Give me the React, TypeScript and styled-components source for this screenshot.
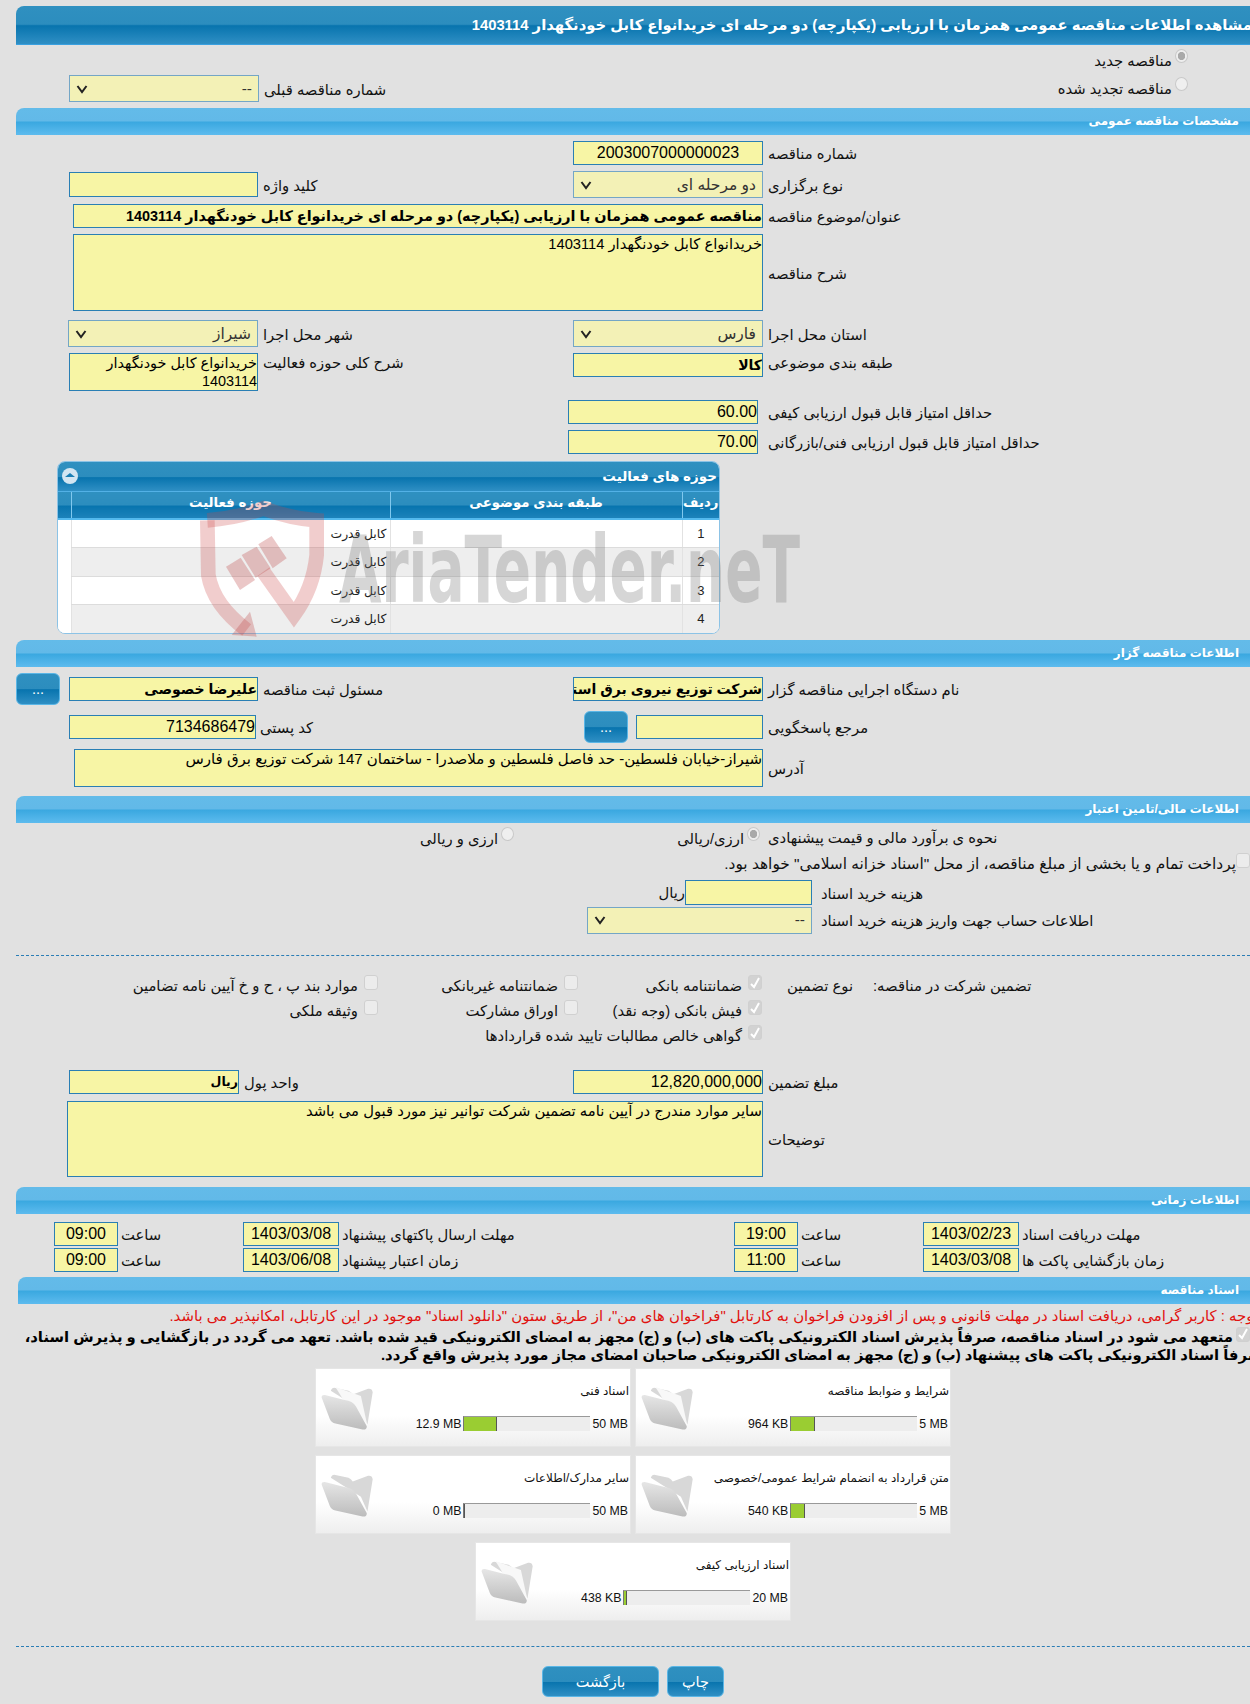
import React from "react";
import styled, { createGlobalStyle } from "styled-components";

const Global = createGlobalStyle`
  html, body { margin: 0; padding: 0; width: 1250px; height: 1704px; overflow: hidden; background: #e1e1e1; }
  body { font-family: "Liberation Sans", "DejaVu Sans", sans-serif; font-size: 14.8px; color: #111; }
`;

const Page = styled.div`
  width: 1234px;
  margin-left: 16px;
  padding-top: 6px;
  direction: rtl;
`;

const TitleBar = styled.div`
  height: 39px;
  margin-right: -30px;
  padding-right: 28px;
  box-sizing: border-box;
  border-radius: 8px 8px 0 0;
  border-bottom: 1px solid #39a0e0;
  background: linear-gradient(#2f90c0 0, #2c8dbe 48%, #0874ae 52%, #2f8fc4 100%);
  color: #fff;
  font-size: 14.8px;
  font-weight: bold;
  line-height: 38px;
  white-space: nowrap;
`;

const SectionBar = styled.div<{ $mt: number; $inset?: number }>`
  height: 27px;
  margin-top: ${(p) => p.$mt}px;
  margin-left: ${(p) => p.$inset || 0}px;
  margin-right: -12px;
  padding-right: 23px;
  box-sizing: border-box;
  border-radius: 8px 8px 0 0;
  background: linear-gradient(#63bbe9 0, #62b9e8 48%, #3aa8e0 52%, #5dbbee 100%);
  color: #fff;
  font-size: 12px;
  font-weight: bold;
  line-height: 26px;
`;

const Row = styled.div<{ $mt: number; $h: number; $top?: boolean }>`
  display: flex;
  height: ${(p) => p.$h}px;
  margin-top: ${(p) => p.$mt}px;
  align-items: ${(p) => (p.$top ? "flex-start" : "center")};
`;

const Label = styled.div<{ $w: number; $pt?: number }>`
  flex: none;
  width: ${(p) => p.$w}px;
  padding-top: ${(p) => p.$pt ?? 1}px;
  box-sizing: border-box;
  text-align: left;
  white-space: nowrap;
`;

const Field = styled.div<{ $w: number; $h: number; $size?: number; $bold?: boolean; $center?: boolean; $wrap?: boolean }>`
  flex: none;
  width: ${(p) => p.$w}px;
  height: ${(p) => p.$h}px;
  box-sizing: border-box;
  background: #f7f5a5;
  border: 1px solid #2a7fb4;
  overflow: hidden;
  font-size: ${(p) => p.$size || 16}px;
  line-height: ${(p) => (p.$wrap ? "18px" : `${p.$h - 2}px`)};
  font-weight: ${(p) => (p.$bold ? "bold" : "normal")};
  text-align: ${(p) => (p.$center ? "center" : "right")};
  white-space: ${(p) => (p.$wrap ? "normal" : "nowrap")};
  color: #000;
`;

const SelectBox = styled.div<{ $w: number }>`
  flex: none;
  display: flex;
  justify-content: space-between;
  align-items: center;
  width: ${(p) => p.$w}px;
  height: 27px;
  padding: 0 6px 0 5px;
  box-sizing: border-box;
  background: #f3f1b6;
  border: 1px solid #74a6c6;
  font-size: 15.5px;
  color: #333;
`;

const Chevron = () => (
  <svg width="14" height="14" viewBox="0 0 14 14" fill="none" stroke="#222" strokeWidth="2">
    <path d="M2.5 4 L7 10 L11.5 4" />
  </svg>
);

const RadioMark = styled.span<{ $on?: boolean }>`
  flex: none;
  display: inline-block;
  width: 13px;
  height: 14px;
  margin-top: -9px;
  box-sizing: border-box;
  border-radius: 50%;
  border: 1px solid #c9c9c9;
  background: ${(p) => (p.$on ? "radial-gradient(#a9a9a9 0 3.5px, #eee 4px)" : "#efefef")};
`;

const Option = styled.div<{ $w?: number; $pr?: number; $gap?: number; $size?: number; $mt?: number }>`
  flex: none;
  display: flex;
  align-items: center;
  gap: ${(p) => p.$gap ?? 3}px;
  width: ${(p) => (p.$w ? `${p.$w}px` : "auto")};
  padding-right: ${(p) => p.$pr || 0}px;
  margin-top: ${(p) => p.$mt || 0}px;
  box-sizing: border-box;
  font-size: ${(p) => (p.$size ? `${p.$size}px` : "inherit")};
  white-space: nowrap;
`;

const CheckBoxMark = styled.span<{ $on?: boolean }>`
  flex: none;
  display: inline-flex;
  align-items: center;
  justify-content: center;
  width: 14px;
  height: 15px;
  margin-top: -6px;
  box-sizing: border-box;
  border-radius: 3px;
  border: 1px solid #d0d0d0;
  background: ${(p) => (p.$on ? "#d2d2d2" : "#ececec")};
`;

const Check = ({ on }: { on?: boolean }) => (
  <CheckBoxMark $on={on}>
    {on && (
      <svg width="12" height="12" viewBox="0 0 12 12" fill="none" stroke="#fff" strokeWidth="2">
        <path d="M2 7 L5 10 L10 1" />
      </svg>
    )}
  </CheckBoxMark>
);

const PanelFrame = styled.div`
  position: relative;
  width: 663px;
  height: 173px;
  margin: 7px 530px 0 0;
`;

const Panel = styled.div`
  height: 100%;
  box-sizing: border-box;
  border: 1px solid #8cc3e6;
  border-radius: 8px;
  background: #fff;
  overflow: hidden;
`;

const PanelHead = styled.div`
  display: flex;
  justify-content: space-between;
  align-items: center;
  height: 30px;
  padding: 0 2px 2px 4px;
  box-sizing: border-box;
  border-bottom: 1px solid #53b1e6;
  background: linear-gradient(#2f90c0 0, #2c8dbe 50%, #0874ae 54%, #2f8fc4 100%);
  color: #fff;
  font-size: 13.5px;
  font-weight: bold;
`;

const Toggle = styled.span`
  display: inline-flex;
  align-items: center;
  justify-content: center;
  width: 16px;
  height: 16px;
  border-radius: 50%;
  background: #d3e6f2;
  &::before {
    content: "";
    border: 5px solid transparent;
    border-top: 0;
    border-bottom: 4px solid #1c7fb5;
    margin-bottom: 2px;
  }
`;

const Table = styled.table`
  width: 100%;
  border-collapse: collapse;
  table-layout: fixed;
`;

const Th = styled.th<{ $w?: number }>`
  width: ${(p) => (p.$w ? `${p.$w}px` : "auto")};
  height: 27px;
  box-sizing: border-box;
  padding: 0 0 5px;
  background: linear-gradient(#2f90c0 0, #2c8dbe 50%, #0874ae 54%, #1c82ba 100%);
  border-bottom: 2px solid #53b9ee;
  border-left: 1px solid #80c8ee;
  color: #fff;
  font-size: 13.3px;
  font-weight: bold;
  &:last-child { border-left: 0; }
`;

const Tr = styled.tr<{ $alt: boolean }>`
  background: ${(p) => (p.$alt ? "#eeeeee" : "#ffffff")};
`;

const Td = styled.td<{ $center?: boolean }>`
  height: 28.5px;
  padding: 0 3px;
  box-sizing: border-box;
  border-bottom: 1px solid #dcdcdc;
  border-left: 1px solid #e2e2e2;
  font-size: ${(p) => (p.$center ? 13 : 12.4)}px;
  text-align: ${(p) => (p.$center ? "center" : "right")};
  color: #222;
  &:last-child { border-left: 0; border-bottom: 0; background: #fff; }
`;

const ShieldMark = styled.svg`
  position: absolute;
  left: -7px;
  top: -6px;
  pointer-events: none;
`;

const WordMark = styled.svg`
  position: absolute;
  left: 282px;
  top: 62px;
  direction: ltr;
  pointer-events: none;
`;

const WatermarkText = styled.text`
  font-family: "DejaVu Sans Condensed", "DejaVu Sans", sans-serif;
  font-weight: bold;
  font-size: 92px;
  fill: rgba(120, 120, 120, 0.3);
`;

const Dashed = styled.div<{ $mt: number }>`
  margin-top: ${(p) => p.$mt}px;
  margin-right: -10px;
  border-top: 1px dashed #2a7db5;
`;

const GuaranteeGrid = styled.div`
  display: grid;
  grid-template-columns: 377px 111px 184px 200px auto;
  grid-auto-rows: 25px;
  margin-top: 17px;
  align-items: center;
`;

const GridLabel = styled.div<{ $pr?: number; $left?: boolean }>`
  padding-right: ${(p) => p.$pr || 0}px;
  text-align: ${(p) => (p.$left ? "left" : "right")};
  white-space: nowrap;
`;

const Notice = styled.div`
  margin: 2px -8px 0 0;
  height: 20px;
  color: #e0120f;
  font-size: 14.9px;
  line-height: 20px;
  white-space: nowrap;
`;

const Pledge = styled.div`
  margin: 2px 0 0 0;
  font-size: 14.8px;
  font-weight: bold;
  line-height: 18px;
  color: #000;
  white-space: nowrap;
`;

const PledgeSecond = styled.div`
  margin-right: -12px;
`;

const CardGrid = styled.div`
  display: flex;
  flex-wrap: wrap;
  justify-content: center;
  gap: 8px 4px;
  width: 640px;
  margin: 4px 297px 0 0;
`;

const Card = styled.div`
  display: flex;
  justify-content: space-between;
  width: 316px;
  height: 79px;
  box-sizing: border-box;
  padding: 0 1px 0 4px;
  border: 1px solid #e6e6e6;
  background: linear-gradient(#fff 0, #fff 60%, #eeeeee 100%);
`;

const CardBody = styled.div`
  display: flex;
  flex-direction: column;
  flex: 1;
`;

const CardTitle = styled.div`
  margin-top: 13px;
  height: 18px;
  font-size: 12px;
  line-height: 18px;
  color: #111;
  white-space: nowrap;
`;

const Usage = styled.div`
  direction: ltr;
  display: flex;
  justify-content: flex-end;
  align-items: center;
  gap: 2px;
  margin-top: 16px;
  padding-right: 1px;
  font-size: 12.3px;
  color: #111;
`;

const Bar = styled.div`
  width: 127px;
  height: 15px;
  box-sizing: border-box;
  border-top: 1px solid #999;
  border-left: 1px solid #777;
  background: #ededed;
`;

const BarFill = styled.div`
  height: 100%;
  box-sizing: border-box;
  background: #9acd32;
  border-right: 1px solid #555;
`;

const FolderIcon = styled.svg`
  flex: none;
  margin-top: 15px;
`;

const Folder = ({ paper, id }: { paper?: boolean; id: string }) => (
  <FolderIcon width="54" height="50" viewBox="25 75 165 145">
    <defs>
      <linearGradient id={id} x1="0" y1="0" x2="0" y2="1">
        <stop offset="0" stopColor="#e6e6e6" />
        <stop offset="1" stopColor="#bcbcbc" />
      </linearGradient>
    </defs>
    <path d="M58 92 Q62 80 72 83 L112 92 Q120 95 125 103 L172 86 Q184 84 186 96 L170 195 L150 150 Z" fill="#d8d8d8" />
    {paper && <path d="M72 80 L150 108 L168 190 L100 125 Z" fill="#f8f8f8" />}
    <path d="M30 112 Q30 104 40 105 L100 120 Q125 122 135 140 L168 200 Q168 212 155 210 L72 192 Q60 190 55 178 Z" fill={`url(#${id})`} />
  </FolderIcon>
);

const DocCard = ({ title, used, max, pct, paper, id }: { title: string; used: string; max: string; pct: number; paper?: boolean; id: string }) => (
  <Card>
    <CardBody>
      <CardTitle>{title}</CardTitle>
      <Usage>
        <span>{used}</span>
        <Bar>
          <BarFill style={{ width: `${pct}%` }} />
        </Bar>
        <span>{max}</span>
      </Usage>
    </CardBody>
    <Folder paper={paper} id={id} />
  </Card>
);

const Actions = styled.div`
  display: flex;
  justify-content: center;
  gap: 8px;
  margin: 19px 0 0 0;
`;

const Btn = styled.button<{ $w: number; $h?: number }>`
  flex: none;
  width: ${(p) => p.$w}px;
  height: ${(p) => p.$h || 31}px;
  border: 1px solid #5ab6e6;
  border-radius: 6px;
  padding: 0;
  background: linear-gradient(#2f90c0 0, #2c8dbe 50%, #0874ae 52%, #2f8fc4 100%);
  color: #fff;
  font: 14.5px "Liberation Sans", "DejaVu Sans", sans-serif;
`;

const Unit = styled.span`
  flex: none;
`;

const Spacer = styled.div<{ $w: number }>`
  flex: none;
  width: ${(p) => p.$w}px;
`;

const TABLE_ROWS = [1, 2, 3, 4];

export default function App() {
  return (
    <>
      <Global />
      <Page>
        <TitleBar>مشاهده اطلاعات مناقصه عمومی همزمان با ارزیابی (یکپارچه) دو مرحله ای خریدانواع کابل خودنگهدار 1403114</TitleBar>

        <Row $mt={6} $h={18}>
          <Option $pr={62}>
            <RadioMark $on />
            <span>مناقصه جدید</span>
          </Option>
        </Row>
        <Row $mt={6} $h={27}>
          <Option $w={800} $pr={62}>
            <RadioMark />
            <span>مناقصه تجدید شده</span>
          </Option>
          <Label $w={186}>شماره مناقصه قبلی</Label>
          <Spacer $w={5} />
          <SelectBox $w={190}>
            <span>--</span>
            <Chevron />
          </SelectBox>
        </Row>

        <SectionBar $mt={6}>مشخصات مناقصه عمومی</SectionBar>

        <Row $mt={6} $h={24}>
          <Label $w={482}>شماره مناقصه</Label>
          <Spacer $w={5} />
          <Field $w={190} $h={24} $center>2003007000000023</Field>
        </Row>
        <Row $mt={6} $h={27}>
          <Label $w={482}>نوع برگزاری</Label>
          <Spacer $w={5} />
          <SelectBox $w={190}>
            <span>دو مرحله ای</span>
            <Chevron />
          </SelectBox>
          <Spacer $w={5} />
          <Label $w={305}>کلید واژه</Label>
          <Spacer $w={5} />
          <Field $w={189} $h={25} />
        </Row>
        <Row $mt={6} $h={24}>
          <Label $w={482}>عنوان/موضوع مناقصه</Label>
          <Spacer $w={5} />
          <Field $w={690} $h={24} $size={14.4} $bold>مناقصه عمومی همزمان با ارزیابی (یکپارچه) دو مرحله ای خریدانواع کابل خودنگهدار 1403114</Field>
        </Row>
        <Row $mt={6} $h={77}>
          <Label $w={482}>شرح مناقصه</Label>
          <Spacer $w={5} />
          <Field $w={690} $h={77} $size={14.7} $wrap>خریدانواع کابل خودنگهدار 1403114</Field>
        </Row>
        <Row $mt={9} $h={27}>
          <Label $w={482}>استان محل اجرا</Label>
          <Spacer $w={5} />
          <SelectBox $w={190}>
            <span>فارس</span>
            <Chevron />
          </SelectBox>
          <Spacer $w={5} />
          <Label $w={305}>شهر محل اجرا</Label>
          <Spacer $w={5} />
          <SelectBox $w={190}>
            <span>شیراز</span>
            <Chevron />
          </SelectBox>
        </Row>
        <Row $mt={6} $h={38} $top>
          <Label $w={482}>طبقه بندی موضوعی</Label>
          <Spacer $w={5} />
          <Field $w={190} $h={24} $bold $size={14}>کالا</Field>
          <Spacer $w={5} />
          <Label $w={305}>شرح کلی حوزه فعالیت</Label>
          <Spacer $w={5} />
          <Field $w={189} $h={38} $size={14.4} $wrap>خریدانواع کابل خودنگهدار 1403114</Field>
        </Row>
        <Row $mt={9} $h={24}>
          <Label $w={482}>حداقل امتیاز قابل قبول ارزیابی کیفی</Label>
          <Spacer $w={10} />
          <Field $w={190} $h={24}>60.00</Field>
        </Row>
        <Row $mt={6} $h={24}>
          <Label $w={482}>حداقل امتیاز قابل قبول ارزیابی فنی/بازرگانی</Label>
          <Spacer $w={10} />
          <Field $w={190} $h={24}>70.00</Field>
        </Row>

        <PanelFrame>
          <Panel>
            <PanelHead>
              <span>حوزه های فعالیت</span>
              <Toggle />
            </PanelHead>
            <Table>
              <thead>
                <tr>
                  <Th $w={37}>ردیف</Th>
                  <Th $w={292}>طبقه بندی موضوعی</Th>
                  <Th $w={319}>حوزه فعالیت</Th>
                  <Th />
                </tr>
              </thead>
              <tbody>
                {TABLE_ROWS.map((n) => (
                  <Tr key={n} $alt={n % 2 === 0}>
                    <Td $center>{n}</Td>
                    <Td />
                    <Td>کابل قدرت</Td>
                    <Td />
                  </Tr>
                ))}
              </tbody>
            </Table>
          </Panel>
          <ShieldMark width="400" height="190" viewBox="0 0 1200 570">
            <g fill="none" stroke="rgba(205,70,70,0.27)" strokeWidth="44">
              <path d="M472 196 Q560 190 640 160 Q720 190 800 196 L800 300 Q790 400 732 480 L640 350" />
              <path d="M472 196 L475 360 Q490 450 590 525" />
            </g>
            <g fill="rgba(190,70,70,0.3)">
              <path d="M528 335 L572 308 L615 375 L570 405 Z" />
              <path d="M575 300 L620 275 L662 340 L617 368 Z" />
              <path d="M625 268 L665 243 L710 310 L668 340 Z" />
              <path d="M545 540 L620 545 L600 470 Z" />
            </g>
          </ShieldMark>
          <WordMark width="480" height="100" viewBox="0 0 480 100">
            <WatermarkText x="0" y="79" textLength="461" lengthAdjust="spacingAndGlyphs">AriaTender.neT</WatermarkText>
          </WordMark>
        </PanelFrame>

        <SectionBar $mt={6}>اطلاعات مناقصه گزار</SectionBar>

        <Row $mt={6} $h={32}>
          <Label $w={482}>نام دستگاه اجرایی مناقصه گزار</Label>
          <Spacer $w={5} />
          <Field $w={190} $h={24} $bold $size={14}>شرکت توزیع نیروی برق استان فارس</Field>
          <Spacer $w={5} />
          <Label $w={305}>مسئول ثبت مناقصه</Label>
          <Spacer $w={5} />
          <Field $w={189} $h={24} $bold $size={14}>علیرضا خصوصی</Field>
          <Spacer $w={9} />
          <Btn $w={44} $h={32}>...</Btn>
        </Row>
        <Row $mt={6} $h={32}>
          <Label $w={482}>مرجع پاسخگویی</Label>
          <Spacer $w={5} />
          <Field $w={127} $h={24} />
          <Spacer $w={8} />
          <Btn $w={44} $h={32}>...</Btn>
          <Spacer $w={16} />
          <Label $w={308}>کد پستی</Label>
          <Spacer $w={4} />
          <Field $w={187} $h={24}>7134686479</Field>
        </Row>
        <Row $mt={6} $h={38}>
          <Label $w={482}>آدرس</Label>
          <Spacer $w={5} />
          <Field $w={689} $h={38} $size={15} $wrap>شیراز-خیابان فلسطین-  حد فاصل فلسطین و ملاصدرا - ساختمان 147 شرکت توزیع برق فارس</Field>
        </Row>

        <SectionBar $mt={9}>اطلاعات مالی/تامین اعتبار</SectionBar>

        <Row $mt={4} $h={20}>
          <Label $w={482}>نحوه ی برآورد مالی و قیمت پیشنهادی</Label>
          <Spacer $w={8} />
          <Option $w={246} $mt={3}>
            <RadioMark $on />
            <span>ارزی/ریالی</span>
          </Option>
          <Option $mt={3}>
            <RadioMark />
            <span>ارزی و ریالی</span>
          </Option>
        </Row>
        <Row $mt={7} $h={19}>
          <Option $gap={0} $size={15.4}>
            <Check />
            <span>پرداخت تمام و یا بخشی از مبلغ مناقصه، از محل "اسناد خزانه اسلامی" خواهد بود.</span>
          </Option>
        </Row>
        <Row $mt={7} $h={25}>
          <Label $w={429}>هزینه خرید اسناد</Label>
          <Spacer $w={9} />
          <Field $w={127} $h={25} />
          <Unit>ریال</Unit>
        </Row>
        <Row $mt={2} $h={26}>
          <Label $w={429}>اطلاعات حساب جهت واریز هزینه خرید اسناد</Label>
          <Spacer $w={9} />
          <SelectBox $w={225}>
            <span>--</span>
            <Chevron />
          </SelectBox>
        </Row>

        <Dashed $mt={22} />

        <GuaranteeGrid>
          <GridLabel $left>تضمین شرکت در مناقصه:</GridLabel>
          <GridLabel $pr={20}>نوع تضمین</GridLabel>
          <Option $gap={6}><Check on /><span>ضمانتنامه بانکی</span></Option>
          <Option $gap={6}><Check /><span>ضمانتنامه غیربانکی</span></Option>
          <Option $gap={6}><Check /><span>موارد بند پ ، ح و خ آیین نامه تضامین</span></Option>
          <span />
          <span />
          <Option $gap={6}><Check on /><span>فیش بانکی (وجه نقد)</span></Option>
          <Option $gap={6}><Check /><span>اوراق مشارکت</span></Option>
          <Option $gap={6}><Check /><span>وثیقه ملکی</span></Option>
          <span />
          <span />
          <Option $gap={6}><Check on /><span>گواهی خالص مطالبات تایید شده قراردادها</span></Option>
        </GuaranteeGrid>

        <Row $mt={22} $h={24}>
          <Label $w={482}>مبلغ تضمین</Label>
          <Spacer $w={5} />
          <Field $w={190} $h={24}>12,820,000,000</Field>
          <Spacer $w={5} />
          <Label $w={324}>واحد پول</Label>
          <Spacer $w={5} />
          <Field $w={170} $h={24} $bold $size={12.5}>ریال</Field>
        </Row>
        <Row $mt={7} $h={76}>
          <Label $w={482}>توضیحات</Label>
          <Spacer $w={5} />
          <Field $w={696} $h={76} $size={14.8} $wrap>سایر موارد مندرج در آیین نامه تضمین شرکت توانیر نیز مورد قبول می باشد</Field>
        </Row>

        <SectionBar $mt={10}>اطلاعات زمانی</SectionBar>

        <Row $mt={8} $h={24}>
          <Label $w={228}>مهلت دریافت اسناد</Label>
          <Spacer $w={3} />
          <Field $w={96} $h={24} $center>1403/02/23</Field>
          <Label $w={122}>ساعت</Label>
          <Spacer $w={3} />
          <Field $w={64} $h={24} $center>19:00</Field>
          <Label $w={392}>مهلت ارسال پاکتهای پیشنهاد</Label>
          <Spacer $w={3} />
          <Field $w={96} $h={24} $center>1403/03/08</Field>
          <Label $w={122}>ساعت</Label>
          <Spacer $w={3} />
          <Field $w={64} $h={24} $center>09:00</Field>
        </Row>
        <Row $mt={2} $h={24}>
          <Label $w={228}>زمان بازگشایی پاکت ها</Label>
          <Spacer $w={3} />
          <Field $w={96} $h={24} $center>1403/03/08</Field>
          <Label $w={122}>ساعت</Label>
          <Spacer $w={3} />
          <Field $w={64} $h={24} $center>11:00</Field>
          <Label $w={392}>زمان اعتبار پیشنهاد</Label>
          <Spacer $w={3} />
          <Field $w={96} $h={24} $center>1403/06/08</Field>
          <Label $w={122}>ساعت</Label>
          <Spacer $w={3} />
          <Field $w={64} $h={24} $center>09:00</Field>
        </Row>

        <SectionBar $mt={5} $inset={2}>اسناد مناقصه</SectionBar>

        <Notice>توجه : کاربر گرامی، دریافت اسناد در مهلت قانونی و پس از افزودن فراخوان به کارتابل "فراخوان های من"، از طریق ستون "دانلود اسناد" موجود در این کارتابل، امکانپذیر می باشد.</Notice>
        <Pledge>
          <Option>
            <Check on />
            <span>متعهد می شود در اسناد مناقصه، صرفاً پذیرش اسناد الکترونیکی پاکت های (ب) و (ج) مجهز به امضای الکترونیکی قید شده باشد. تعهد می گردد در بازگشایی و پذیرش اسناد،</span>
          </Option>
          <PledgeSecond>صرفاً اسناد الکترونیکی پاکت های پیشنهاد (ب) و (ج) مجهز به امضای الکترونیکی صاحبان امضای مجاز مورد پذیرش واقع گردد.</PledgeSecond>
        </Pledge>

        <CardGrid>
          <DocCard id="f1" title="شرایط و ضوابط مناقصه" used="964 KB" max="5 MB" pct={19} paper />
          <DocCard id="f2" title="اسناد فنی" used="12.9 MB" max="50 MB" pct={26} paper />
          <DocCard id="f3" title="متن قرارداد به انضمام شرایط عمومی/خصوصی" used="540 KB" max="5 MB" pct={10.5} />
          <DocCard id="f4" title="سایر مدارک/اطلاعات" used="0 MB" max="50 MB" pct={0} />
          <DocCard id="f5" title="اسناد ارزیابی کیفی" used="438 KB" max="20 MB" pct={2} paper />
        </CardGrid>

        <Dashed $mt={25} />

        <Actions>
          <Btn $w={57}>چاپ</Btn>
          <Btn $w={117}>بازگشت</Btn>
        </Actions>
      </Page>
    </>
  );
}
